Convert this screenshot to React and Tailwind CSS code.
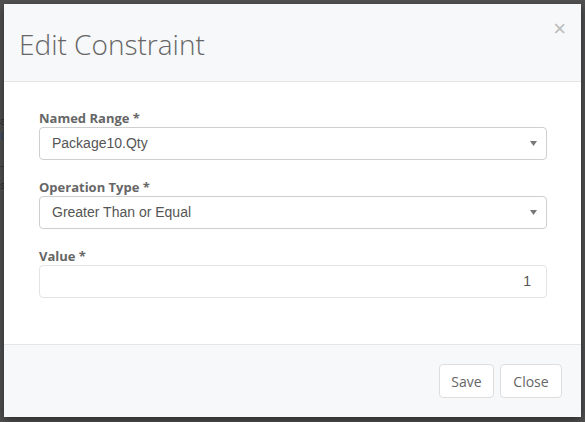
import React from "react";

function Caret() {
  return (
    <svg width="7" height="5" viewBox="0 0 7 5" className="shrink-0">
      <path d="M0 0 L7 0 L3.5 5 Z" fill="#777" />
    </svg>
  );
}

function SelectBox({ value }) {
  return (
    <div className="h-[33px] border border-[#cfcfcf] rounded-[4px] bg-white flex items-center pl-[12px] pr-[9px]">
      <span className="flex-1 text-[14px] text-[#555] font-['Liberation_Sans',Arial,sans-serif]">{value}</span>
      <Caret />
    </div>
  );
}

function Label({ children }) {
  return (
    <div className="h-[17px] leading-[17px] text-[13px] font-bold text-[#666] font-['Open_Sans',sans-serif]">
      {children}
    </div>
  );
}

export default function App() {
  return (
    <div className="w-[585px] h-[422px] bg-[#525252] pt-[4px] pl-[4px] relative overflow-hidden">
      <div className="absolute left-0 top-[116px] text-[11px] text-[#333] font-['Liberation_Sans',sans-serif] leading-none">a</div>
      <div className="absolute left-0 top-[131px] text-[11px] text-[#2a4a6a] font-['Liberation_Sans',sans-serif] leading-none">C</div>
      <div className="absolute left-0 top-[160px] text-[11px] text-[#333] font-['Liberation_Sans',sans-serif] leading-none">-</div>
      <div className="absolute left-0 top-[180px] text-[11px] text-[#333] font-['Liberation_Sans',sans-serif] leading-none">s</div>
      <div className="relative w-[577px] h-[413px] bg-white flex flex-col shadow-[0_3px_9px_rgba(0,0,0,0.5)]">
        <div className="h-[78px] shrink-0 bg-[#f7f8fa] border-b border-[#e5e5e5] flex items-center pl-[15px] pt-[2px] box-border">
          <span className="text-[28px] font-light text-[#666] font-['Open_Sans',sans-serif]">Edit Constraint</span>
        </div>
        <div className="absolute top-[14px] right-[15px] text-[22px] leading-[22px] text-[#bbb] font-['Liberation_Sans',sans-serif]">×</div>
        <div className="flex-1 pt-[28px] pl-[35px] pr-[34px]">
          <Label>Named Range *</Label>
          <SelectBox value="Package10.Qty" />
          <div className="h-[19px]" />
          <Label>Operation Type *</Label>
          <SelectBox value="Greater Than or Equal" />
          <div className="h-[19px]" />
          <Label>Value *</Label>
          <div className="h-[33px] border border-[#e3e3e3] rounded-[4px] bg-white flex items-center justify-end pr-[15px]">
            <span className="text-[14px] text-[#555] font-['Liberation_Sans',Arial,sans-serif]">1</span>
          </div>
        </div>
        <div className="h-[72px] shrink-0 bg-[#f7f8fa] border-t border-[#e5e5e5] flex items-center justify-end gap-[6px] pr-[19px] box-content">
          <button className="h-[34px] w-[55px] bg-white border border-[#dedede] rounded-[4px] text-[14px] text-[#666] font-['Open_Sans',sans-serif]">Save</button>
          <button className="h-[34px] w-[62px] bg-white border border-[#dedede] rounded-[4px] text-[14px] text-[#666] font-['Open_Sans',sans-serif]">Close</button>
        </div>
      </div>
    </div>
  );
}
